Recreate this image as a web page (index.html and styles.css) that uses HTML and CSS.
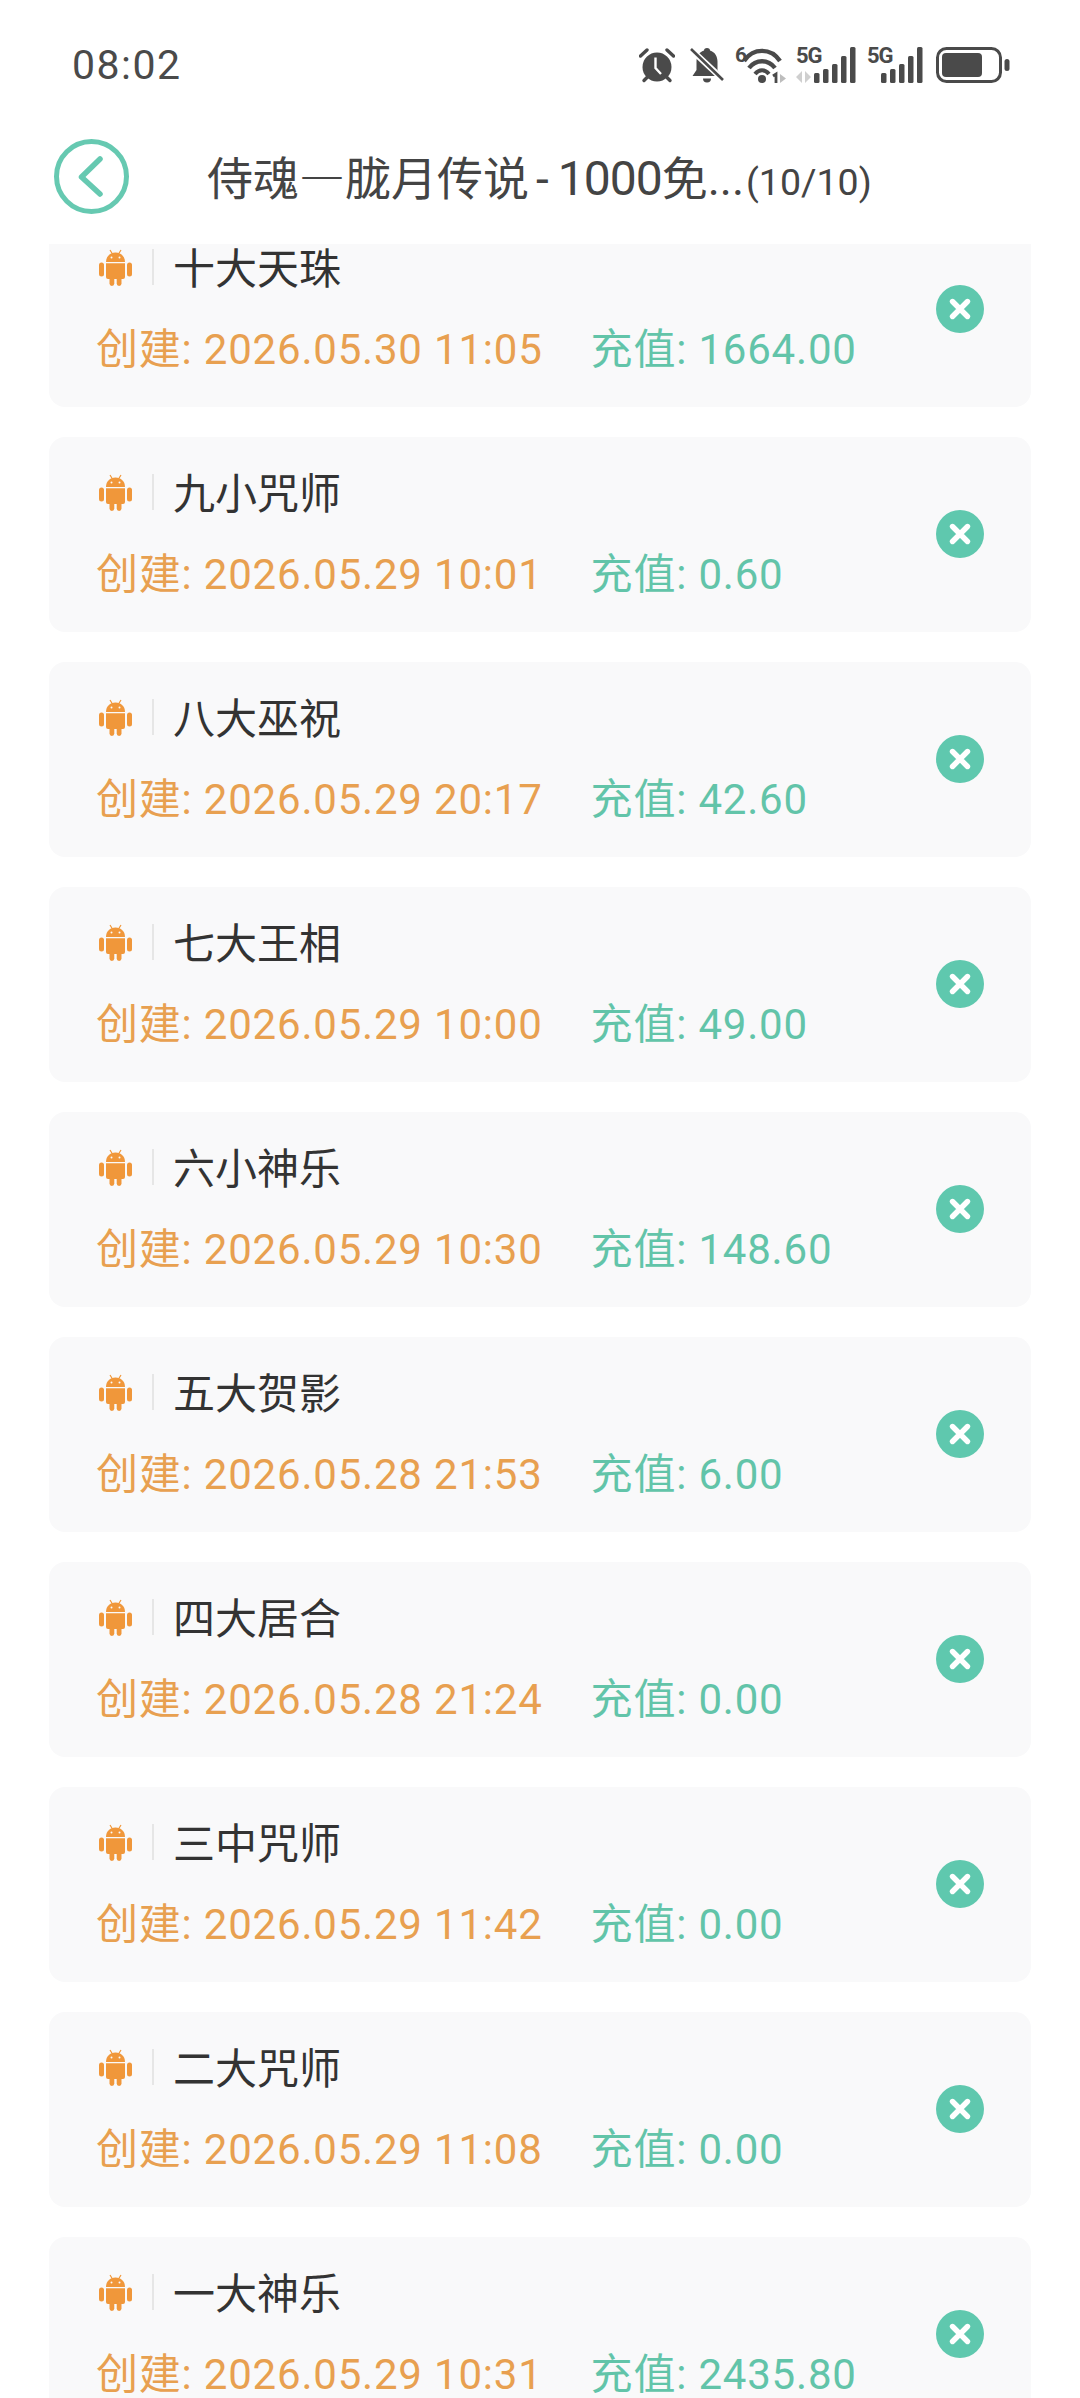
FILE: index.html
```html
<!DOCTYPE html>
<html lang="zh">
<head>
<meta charset="utf-8">
<title>侍魂—胧月传说</title>
<link rel="stylesheet" href="styles.css">
</head>
<body>
<svg class="sprite" xmlns="http://www.w3.org/2000/svg">
  <symbol id="android" viewBox="0 0 33 37">
    <path d="M7 13C7 7.500 11 3.600 16.500 3.600S26 7.500 26 13Z" fill="currentColor"/>
    <path d="M11 1l2.500 4M22 1l-2.500 4" stroke="currentColor" stroke-width="1.200"/>
    <circle cx="12.500" cy="8.500" r="1" fill="#f9f9fa"/>
    <circle cx="20.500" cy="8.500" r="1" fill="#f9f9fa"/>
    <path d="M7 14.300h19V28a2 2 0 0 1-2 2H9a2 2 0 0 1-2-2Z" fill="currentColor"/>
    <rect x="0" y="13.500" width="5" height="14" rx="2.500" fill="currentColor"/>
    <rect x="28" y="13.500" width="5" height="14" rx="2.500" fill="currentColor"/>
    <rect x="10.500" y="27" width="4.800" height="10" rx="2.400" fill="currentColor"/>
    <rect x="17.700" y="27" width="4.800" height="10" rx="2.400" fill="currentColor"/>
  </symbol>
  <symbol id="close" viewBox="0 0 48 48">
    <circle cx="24" cy="24" r="24" fill="currentColor"/>
    <path d="M16.500 16.500l15 15M31.500 16.500l-15 15" stroke="#fff" stroke-width="5.400" stroke-linecap="round"/>
  </symbol>
  <symbol id="bars" viewBox="0 0 42 36">
    <rect x="0" y="26" width="5.500" height="10" rx="1.500" fill="currentColor"/>
    <rect x="9" y="22" width="5.500" height="14" rx="1.500" fill="currentColor"/>
    <rect x="18" y="17" width="5.500" height="19" rx="1.500" fill="currentColor"/>
    <rect x="27" y="9" width="5.500" height="27" rx="1.500" fill="currentColor"/>
    <rect x="36" y="0" width="5.500" height="36" rx="1.500" fill="currentColor"/>
  </symbol>
</svg>

<header class="top">
  <div class="status">
    <span class="time">08:02</span>
    <div class="status-icons">
      <svg class="ic-alarm" viewBox="0 0 36 36">
        <circle cx="18" cy="20" r="14.500" fill="#4a4a4a"/>
        <path d="M1.500 9 8 3M34.500 9 28 3" stroke="#4a4a4a" stroke-width="3.400" stroke-linecap="round"/>
        <path d="M5 33.500l3-3M31 33.500l-3-3" stroke="#4a4a4a" stroke-width="3.400" stroke-linecap="round"/>
        <path d="M16.500 10.500v10.500l5.500 6" fill="none" stroke="#fff" stroke-width="2.400"/>
      </svg>
      <svg class="ic-bell" viewBox="0 0 34 36">
        <path d="M17 1c2 0 3 1 3 2.500 5 1.500 7.500 6 7.500 11V23l4 6H2.500l4-6v-8.500C6.500 9.500 9 5 14 3.500 14 2 15 1 17 1Z" fill="#4a4a4a"/>
        <path d="M13 31.500h8a4 4 0 0 1-8 0Z" fill="#4a4a4a"/>
        <path d="M1 2.500 33 32.500" stroke="#fff" stroke-width="6"/>
        <path d="M1 2 33 33" stroke="#4a4a4a" stroke-width="2.600"/>
      </svg>
      <div class="wifi">
        <span class="net-six">6</span>
        <svg class="ic-wifi" viewBox="0 0 44 36">
          <path d="M1 14C10 .500 28 .500 37 14" fill="none" stroke="#4a4a4a" stroke-width="4.400"/>
          <path d="M6 21c7-9 19-9 26 0" fill="none" stroke="#4a4a4a" stroke-width="4.400"/>
          <path d="M12 27c4-5 10-5 14 0" fill="none" stroke="#4a4a4a" stroke-width="4"/>
          <circle cx="19" cy="32" r="4" fill="#4a4a4a"/>
          <path d="M33 36V27l-3 2" fill="none" stroke="#4a4a4a" stroke-width="2.800"/>
          <path d="M37 27v9l6-4.500Z" fill="#bdbdbd"/>
        </svg>
      </div>
      <div class="sim">
        <span class="net-5g">5G</span>
        <svg class="ic-arrows" viewBox="0 0 16 12"><path d="M6 0v12L0 6ZM9 0v12l6-6Z" fill="#cfcfcf"/></svg>
        <svg class="ic-bars"><use href="#bars"/></svg>
      </div>
      <div class="sim sim-b">
        <span class="net-5g">5G</span>
        <svg class="ic-bars"><use href="#bars"/></svg>
      </div>
      <svg class="ic-battery" viewBox="0 0 74 36">
        <rect x="1.500" y="1.500" width="63" height="33" rx="9" fill="none" stroke="#4a4a4a" stroke-width="3"/>
        <rect x="6" y="6" width="40" height="24" rx="4" fill="#4a4a4a"/>
        <rect x="68.500" y="12" width="5" height="12" rx="2.500" fill="#4a4a4a"/>
      </svg>
    </div>
  </div>
  <nav class="bar">
    <button class="back" type="button" aria-label="返回">
      <svg viewBox="0 0 75 75">
        <circle cx="37.500" cy="37.500" r="35" fill="none" stroke="#66c9b1" stroke-width="5"/>
        <path d="M46 20 27.500 38 46 55" fill="none" stroke="#66c9b1" stroke-width="5.500" stroke-linecap="round" stroke-linejoin="round"/>
      </svg>
    </button>
    <h1 class="title">侍魂<span class="dash">—</span>胧月传说<span class="hy">-</span><span class="digits">1000</span>免...<small>(10/10)</small></h1>
  </nav>
</header>

<main class="viewport">
  <ul class="list">
    <li class="card">
      <div class="info">
        <div class="name-row"><svg class="android"><use href="#android"/></svg><i class="rule"></i><span class="name">十大天珠</span></div>
        <div class="meta"><span class="created">创建: 2026.05.30 11:05</span><span class="paid">充值: 1664.00</span></div>
      </div>
      <svg class="close"><use href="#close"/></svg>
    </li>
    <li class="card">
      <div class="info">
        <div class="name-row"><svg class="android"><use href="#android"/></svg><i class="rule"></i><span class="name">九小咒师</span></div>
        <div class="meta"><span class="created">创建: 2026.05.29 10:01</span><span class="paid">充值: 0.60</span></div>
      </div>
      <svg class="close"><use href="#close"/></svg>
    </li>
    <li class="card">
      <div class="info">
        <div class="name-row"><svg class="android"><use href="#android"/></svg><i class="rule"></i><span class="name">八大巫祝</span></div>
        <div class="meta"><span class="created">创建: 2026.05.29 20:17</span><span class="paid">充值: 42.60</span></div>
      </div>
      <svg class="close"><use href="#close"/></svg>
    </li>
    <li class="card">
      <div class="info">
        <div class="name-row"><svg class="android"><use href="#android"/></svg><i class="rule"></i><span class="name">七大王相</span></div>
        <div class="meta"><span class="created">创建: 2026.05.29 10:00</span><span class="paid">充值: 49.00</span></div>
      </div>
      <svg class="close"><use href="#close"/></svg>
    </li>
    <li class="card">
      <div class="info">
        <div class="name-row"><svg class="android"><use href="#android"/></svg><i class="rule"></i><span class="name">六小神乐</span></div>
        <div class="meta"><span class="created">创建: 2026.05.29 10:30</span><span class="paid">充值: 148.60</span></div>
      </div>
      <svg class="close"><use href="#close"/></svg>
    </li>
    <li class="card">
      <div class="info">
        <div class="name-row"><svg class="android"><use href="#android"/></svg><i class="rule"></i><span class="name">五大贺影</span></div>
        <div class="meta"><span class="created">创建: 2026.05.28 21:53</span><span class="paid">充值: 6.00</span></div>
      </div>
      <svg class="close"><use href="#close"/></svg>
    </li>
    <li class="card">
      <div class="info">
        <div class="name-row"><svg class="android"><use href="#android"/></svg><i class="rule"></i><span class="name">四大居合</span></div>
        <div class="meta"><span class="created">创建: 2026.05.28 21:24</span><span class="paid">充值: 0.00</span></div>
      </div>
      <svg class="close"><use href="#close"/></svg>
    </li>
    <li class="card">
      <div class="info">
        <div class="name-row"><svg class="android"><use href="#android"/></svg><i class="rule"></i><span class="name">三中咒师</span></div>
        <div class="meta"><span class="created">创建: 2026.05.29 11:42</span><span class="paid">充值: 0.00</span></div>
      </div>
      <svg class="close"><use href="#close"/></svg>
    </li>
    <li class="card">
      <div class="info">
        <div class="name-row"><svg class="android"><use href="#android"/></svg><i class="rule"></i><span class="name">二大咒师</span></div>
        <div class="meta"><span class="created">创建: 2026.05.29 11:08</span><span class="paid">充值: 0.00</span></div>
      </div>
      <svg class="close"><use href="#close"/></svg>
    </li>
    <li class="card">
      <div class="info">
        <div class="name-row"><svg class="android"><use href="#android"/></svg><i class="rule"></i><span class="name">一大神乐</span></div>
        <div class="meta"><span class="created">创建: 2026.05.29 10:31</span><span class="paid">充值: 2435.80</span></div>
      </div>
      <svg class="close"><use href="#close"/></svg>
    </li>
  </ul>
</main>
</body>
</html>
```
FILE: styles.css
```css
* { box-sizing: border-box; }
html, body { margin: 0; padding: 0; }
body {
  width: 1080px;
  height: 2398px;
  overflow: hidden;
  background: #fff;
  display: flex;
  flex-direction: column;
  font-family: Roboto, "Noto Sans CJK SC", sans-serif;
  color: #333;
}
.sprite { display: none; }

.top { height: 244px; flex: none; background: #fff; }
.status {
  height: 130px;
  padding: 0 70px 0 72px;
  display: flex;
  align-items: center;
  justify-content: space-between;
}
.time { font-size: 41px; color: #4a4a4a; letter-spacing: 1.5px; line-height: 1; }
.status-icons { display: flex; align-items: center; color: #4a4a4a; height: 36px; }
.ic-alarm { width: 36px; height: 36px; margin-right: 15px; flex: none; }
.ic-bell { width: 34px; height: 36px; margin-right: 11px; flex: none; }
.wifi { display: flex; align-items: flex-start; width: 50px; height: 36px; margin-right: 11px; flex: none; }
.net-six { font-size: 21px; font-weight: 700; line-height: 17px; width: 0; }
.ic-wifi { width: 44px; height: 36px; margin-left: 8px; flex: none; }
.sim { position: relative; width: 60px; height: 36px; margin-right: 11px; flex: none; }
.sim-b { width: 56px; margin-right: 13px; }
.net-5g {
  position: absolute; left: 0; top: 0;
  font-size: 22px; font-weight: 700; line-height: 18px;
  letter-spacing: -1px;
}
.ic-arrows { position: absolute; left: 0; bottom: 0; width: 16px; height: 12px; }
.ic-bars { position: absolute; right: 0; top: 0; width: 42px; height: 36px; }
.ic-battery { width: 74px; height: 36px; flex: none; }

.bar { display: flex; align-items: center; height: 92px; padding-left: 54px; }
.back { width: 75px; height: 75px; padding: 0; border: 0; background: none; flex: none; }
.back svg { display: block; width: 75px; height: 75px; }
.title {
  margin: 0 0 0 78px;
  padding-top: 5px;
  font-size: 46px;
  font-weight: 400;
  line-height: 60px;
  color: #444;
  white-space: nowrap;
}
.dash { font-family: "Noto Sans CJK SC", sans-serif; }
.hy { margin: 0 9px 0 7px; }
.digits { font-size: 48px; letter-spacing: -1px; }
.title small { font-size: 37.500px; margin-left: 2px; }

.viewport { flex: 1; min-height: 0; overflow: hidden; }
.list {
  list-style: none;
  margin: -32px 0 0;
  padding: 0 49px;
  display: flex;
  flex-direction: column;
  gap: 30px;
}
.card {
  height: 195px;
  flex: none;
  border-radius: 16px;
  background: #f9f9fa;
  padding: 30px 47px 0 47px;
  display: flex;
  justify-content: space-between;
  align-items: flex-start;
}
.info { display: flex; flex-direction: column; gap: 31px; }
.name-row { display: flex; align-items: center; height: 50px; }
.android { width: 33px; height: 37px; color: #f0973a; margin-left: 3px; flex: none; }
.rule { width: 2px; height: 36px; background: #e6e6e6; margin: 0 19px 0 20px; flex: none; }
.name { font-size: 42px; line-height: 50px; padding-top: 6px; color: #333; }
.meta {
  display: flex;
  align-items: center;
  height: 50px;
  padding-top: 4px;
  font-size: 42px;
  line-height: 46px;
  gap: 48px;
  white-space: nowrap;
}
.created { color: #e8a050; letter-spacing: .8px; }
.paid { color: #62c4a9; letter-spacing: .8px; }
.close { width: 48px; height: 48px; color: #5fc8ae; margin-top: 43px; flex: none; }
```
